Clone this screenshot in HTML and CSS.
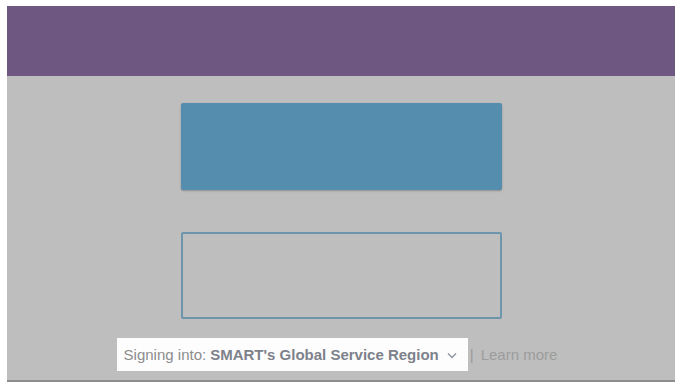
FILE: index.html
```html
<!DOCTYPE html>
<html lang="en">
<head>
    <meta charset="UTF-8">
    <meta name="viewport" content="width=device-width, initial-scale=1.0">
    <title>Sign in</title>
    <link rel="stylesheet" href="styles.css">
</head>
<body>
    <div class="frame">
        <div class="header"></div>
        <div class="panel">
            <div class="signin-button"></div>
            <div class="signin-field"></div>
            <div class="region-row">
                <div class="region-box">
                    <span class="region-label">Signing into:</span>
                    <span class="region-name">SMART's Global Service Region</span>
                    <svg class="chevron" width="10" height="7" viewBox="0 0 10 7">
                        <path d="M1 1.5 L5 5.5 L9 1.5" fill="none" stroke="#8f96a3" stroke-width="1.4"/>
                    </svg>
                </div>
                <span class="divider">|</span>
                <span class="learn-more">Learn more</span>
            </div>
        </div>
    </div>
</body>
</html>
```

FILE: styles.css
```css
body {
    margin: 0;
    background-color: #ffffff;
    font-family: "Liberation Sans", Arial, sans-serif;
}
.frame {
    width: 668px;
    margin: 6px 0 0 7px;
}
.header {
    height: 70px;
    background-color: #6e5780;
}
.panel {
    height: 277px;
    background-color: #bebebe;
    border-bottom: 2px solid #8c8c8c;
    display: flex;
    flex-direction: column;
    align-items: center;
    padding-top: 27px;
}
.signin-button {
    width: 321px;
    height: 87px;
    background-color: #548dad;
    border-radius: 2px;
    box-shadow: 0 1px 2px rgba(0, 0, 0, 0.25);
}
.signin-field {
    width: 317px;
    height: 83px;
    margin-top: 42px;
    border: 2px solid #6d95ab;
    border-radius: 2px;
}
.region-row {
    display: flex;
    align-items: center;
    margin-top: 19px;
    margin-left: -8px;
    font-size: 15px;
}
.region-box {
    display: flex;
    align-items: center;
    height: 33px;
    padding: 0 11px 0 7px;
    background-color: #fdfdfd;
}
.region-label {
    color: #8c8c8c;
    margin-right: 4px;
}
.region-name {
    color: #7d818b;
    font-weight: bold;
}
.chevron {
    margin-left: 8px;
    margin-top: 2px;
}
.divider {
    color: #9c9c9c;
    margin: 0 7px 0 2px;
}
.learn-more {
    color: #9c9c9c;
}
```
